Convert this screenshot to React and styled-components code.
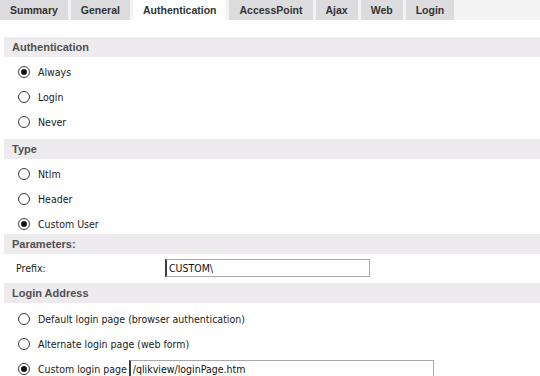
import React from 'react';
import styled, { createGlobalStyle } from 'styled-components';

const GlobalStyle = createGlobalStyle`
  html, body {
    margin: 0;
    padding: 0;
    background: #ffffff;
  }
  body {
    font-family: "DejaVu Sans Condensed", "Liberation Sans", Arial, sans-serif;
    font-size: 10.5px;
    color: #1a1a1a;
  }
`;

const tabs = ['Summary', 'General', 'Authentication', 'AccessPoint', 'Ajax', 'Web', 'Login'];

const App = () => {
  return (
    <Page>
      <GlobalStyle />
      <TabBar>
        {tabs.map((t) => (
          <Tab key={t} active={t === 'Authentication'}>{t}</Tab>
        ))}
      </TabBar>

      <Content>
        <Section>
          <Header>Authentication</Header>
          <Body bottom={7}>
            <RadioRow><Radio checked />Always</RadioRow>
            <RadioRow><Radio />Login</RadioRow>
            <RadioRow><Radio />Never</RadioRow>
          </Body>
        </Section>

        <Section>
          <Header>Type</Header>
          <Body bottom={0}>
            <RadioRow><Radio />Ntlm</RadioRow>
            <RadioRow><Radio />Header</RadioRow>
            <RadioRow><Radio checked />Custom User</RadioRow>
          </Body>
        </Section>

        <Section>
          <Header>Parameters:</Header>
          <Body top={4} bottom={5}>
            <FieldRow>
              <FieldLabel>Prefix:</FieldLabel>
              <TextBox width={205} defaultValue="CUSTOM\" />
            </FieldRow>
          </Body>
        </Section>

        <Section>
          <Header>Login Address</Header>
          <Body top={6} bottom={0}>
            <RadioRow><Radio />Default login page (browser authentication)</RadioRow>
            <RadioRow><Radio />Alternate login page (web form)</RadioRow>
            <RadioRow>
              <Radio checked />Custom login page
              <InlineBox width={305} defaultValue="/qlikview/loginPage.htm" />
            </RadioRow>
          </Body>
        </Section>
      </Content>
    </Page>
  );
};

const Page = styled.div`
  width: 540px;
  height: 376px;
  overflow: hidden;
`;

const TabBar = styled.div`
  display: flex;
  gap: 3px;
  height: 20px;
  background: #f4f4f4;
`;

const Tab = styled.div`
  display: flex;
  align-items: center;
  padding: 0 10px 1px;
  font-family: "Liberation Sans", Arial, sans-serif;
  font-weight: bold;
  font-size: 10.5px;
  color: #333333;
  background: ${(p) => (p.active ? '#ffffff' : '#dcdbdd')};
`;

const Content = styled.div`
  padding: 17px 0 0 4px;
`;

const Section = styled.section`
  display: flex;
  flex-direction: column;
`;

const Header = styled.div`
  height: 20px;
  display: flex;
  align-items: center;
  padding-left: 8px;
  background: #eeebee;
  font-family: "Liberation Sans", Arial, sans-serif;
  font-weight: bold;
  font-size: 11px;
  color: #505050;
`;

const Body = styled.div`
  display: flex;
  flex-direction: column;
  gap: 5px;
  padding: ${(p) => p.top ?? 5}px 0 ${(p) => p.bottom ?? 0}px 14px;
`;

const RadioRow = styled.div`
  display: flex;
  align-items: center;
  height: 20px;
  white-space: nowrap;
`;

const Radio = styled.span`
  position: relative;
  box-sizing: border-box;
  width: 12px;
  height: 12px;
  margin-right: 8px;
  border: 1px solid #3a3a3a;
  border-radius: 50%;
  background: #ffffff;
  flex: none;
  &::after {
    content: '';
    display: ${(p) => (p.checked ? 'block' : 'none')};
    position: absolute;
    left: 2px;
    top: 2px;
    width: 6px;
    height: 6px;
    border-radius: 50%;
    background: #111111;
  }
`;

const FieldRow = styled.div`
  display: flex;
  align-items: center;
  height: 20px;
`;

const FieldLabel = styled.span`
  width: 149px;
  margin-left: -2px;
`;

const TextBox = styled.input`
  box-sizing: border-box;
  width: ${(p) => p.width}px;
  height: 18px;
  padding: 0 2px;
  border: 1px solid #a8a8a8;
  border-left: 2px solid #3c3c3c;
  font-family: "DejaVu Sans Condensed", "Liberation Sans", Arial, sans-serif;
  font-size: 10.5px;
  color: #111111;
  background: #ffffff;
  outline: none;
`;

const InlineBox = styled(TextBox)`
  margin-left: 2px;
`;

export default App;
